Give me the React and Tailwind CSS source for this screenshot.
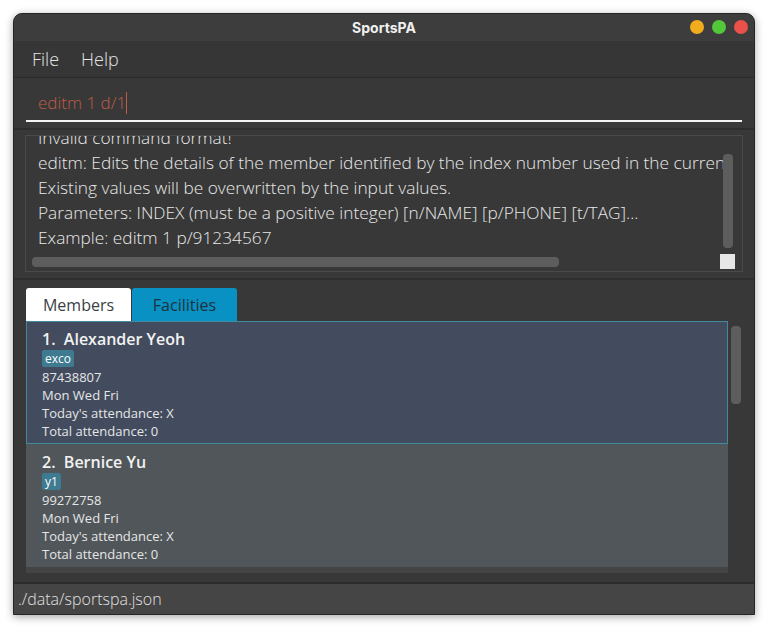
export default function App() {
  const members = [
    { id: 1, name: "Alexander Yeoh", tag: "exco", phone: "87438807", selected: true },
    { id: 2, name: "Bernice Yu", tag: "y1", phone: "99272758", selected: false },
  ];

  return (
    <div className="w-[768px] h-[628px] bg-white pt-[13px] pl-[13px] font-['Open_Sans',sans-serif]">
      <div className="w-[742px] h-[602px] flex flex-col rounded-t-[9px] overflow-hidden bg-[#383838] border border-[#262626] shadow-[0_2px_8px_rgba(0,0,0,0.35)]">
        {/* title bar */}
        <div className="h-[27px] shrink-0 bg-[#3d3d3d] relative flex items-center justify-center">
          <span className="text-[14px] font-bold text-[#f0f0f0] font-['Inter',sans-serif]">SportsPA</span>
          <div className="absolute right-[6px] top-[6px] flex gap-[8px]">
            <span className="w-[14px] h-[14px] rounded-full bg-[#f0ac1c]" />
            <span className="w-[14px] h-[14px] rounded-full bg-[#53c73a]" />
            <span className="w-[14px] h-[14px] rounded-full bg-[#e9514a]" />
          </div>
        </div>

        {/* menu bar */}
        <div className="h-[36px] shrink-0 bg-[#363636] flex items-center pl-[18px] gap-[22px] text-[18px] font-light text-[#e4e4e4]">
          <span>File</span>
          <span>Help</span>
        </div>

        {/* command box */}
        <div className="h-[51px] shrink-0 border-t border-[#2b2b2b] bg-[#383838] px-[12px] pt-[13px]">
          <div className="flex items-center h-[24px] pl-[12px] text-[17px] font-light text-[#bd5c47]">
            <span>editm 1 d/1</span>
            <span className="w-[1px] h-[22px] bg-[#bd5c47]" />
          </div>
          <div className="mt-[5px] h-[2px] bg-[#f2f2f2]" />
        </div>

        {/* result display */}
        <div className="h-[150px] shrink-0 border-t-2 border-[#2e2e2e] bg-[#383838] px-[11px] pt-[5px]">
          <div className="relative h-[137px] border border-[#4a4a4a] bg-[#383838] overflow-hidden">
            <div className="w-[699px] overflow-hidden">
              <div className="-mt-[11px] pl-[12px] text-[17.3px] font-light leading-[25px] text-[#e8e8e8] whitespace-nowrap">
                <p>Invalid command format!</p>
                <p>editm: Edits the details of the member identified by the index number used in the current person list.</p>
                <p>Existing values will be overwritten by the input values.</p>
                <p>Parameters: INDEX (must be a positive integer) [n/NAME] [p/PHONE] [t/TAG]...</p>
                <p>Example: editm 1 p/91234567</p>
              </div>
            </div>
            <div className="absolute right-[9px] top-[18px] w-[10px] h-[94px] rounded-[4px] bg-[#5d5d5d]" />
            <div className="absolute left-[6px] bottom-[4px] w-[527px] h-[10px] rounded-[4px] bg-[#5d5d5d]" />
            <div className="absolute right-[7px] bottom-[2px] w-[15px] h-[15px] bg-[#e6e6e6]" />
          </div>
        </div>

        {/* list panel */}
        <div className="flex-1 border-t-2 border-[#2e2e2e] bg-[#383838] px-[12px] pt-[8px]">
          <div className="flex gap-[1px]">
            <div className="w-[105px] h-[33px] bg-white rounded-t-[3px] flex items-center justify-center text-[16px] text-[#3a3f45]">
              Members
            </div>
            <div className="w-[105px] h-[33px] bg-[#0891c2] rounded-t-[3px] flex items-center justify-center text-[16px] text-[#1f3140]">
              Facilities
            </div>
          </div>
          <div className="flex">
            <div className="w-[702px] h-[252px] bg-[#444444]">
              {members.map((m) => (
                <div
                  key={m.id}
                  className={`h-[123px] pt-[6px] pl-[15px] ${
                    m.selected
                      ? "bg-[#424c5e] border border-[#3f8a9c]"
                      : "bg-[#50565a] border border-transparent"
                  }`}
                >
                  <p className="text-[16px] font-semibold leading-[22px] text-[#f2f2f2] whitespace-pre">
                    {`${m.id}.  ${m.name}`}
                  </p>
                  <div className="flex">
                    <span className="h-[17px] px-[3px] rounded-[2px] bg-[#3e7b91] text-[12px] leading-[17px] text-white">
                      {m.tag}
                    </span>
                  </div>
                  <div className="mt-[1px] text-[13px] leading-[18px] text-[#e6e6e6]">
                    <p>{m.phone}</p>
                    <p>Mon Wed Fri</p>
                    <p>Today's attendance: X</p>
                    <p>Total attendance: 0</p>
                  </div>
                </div>
              ))}
            </div>
            <div className="ml-[3px] mt-[5px] w-[10px] h-[78px] rounded-[4px] bg-[#5d5d5d]" />
          </div>
        </div>

        {/* status bar */}
        <div className="h-[32px] shrink-0 border-t-2 border-[#2c2c2c] bg-[#454545] flex items-center pl-[4px] text-[16px] font-light text-[#e0e0e0]">
          ./data/sportspa.json
        </div>
      </div>
    </div>
  );
}
